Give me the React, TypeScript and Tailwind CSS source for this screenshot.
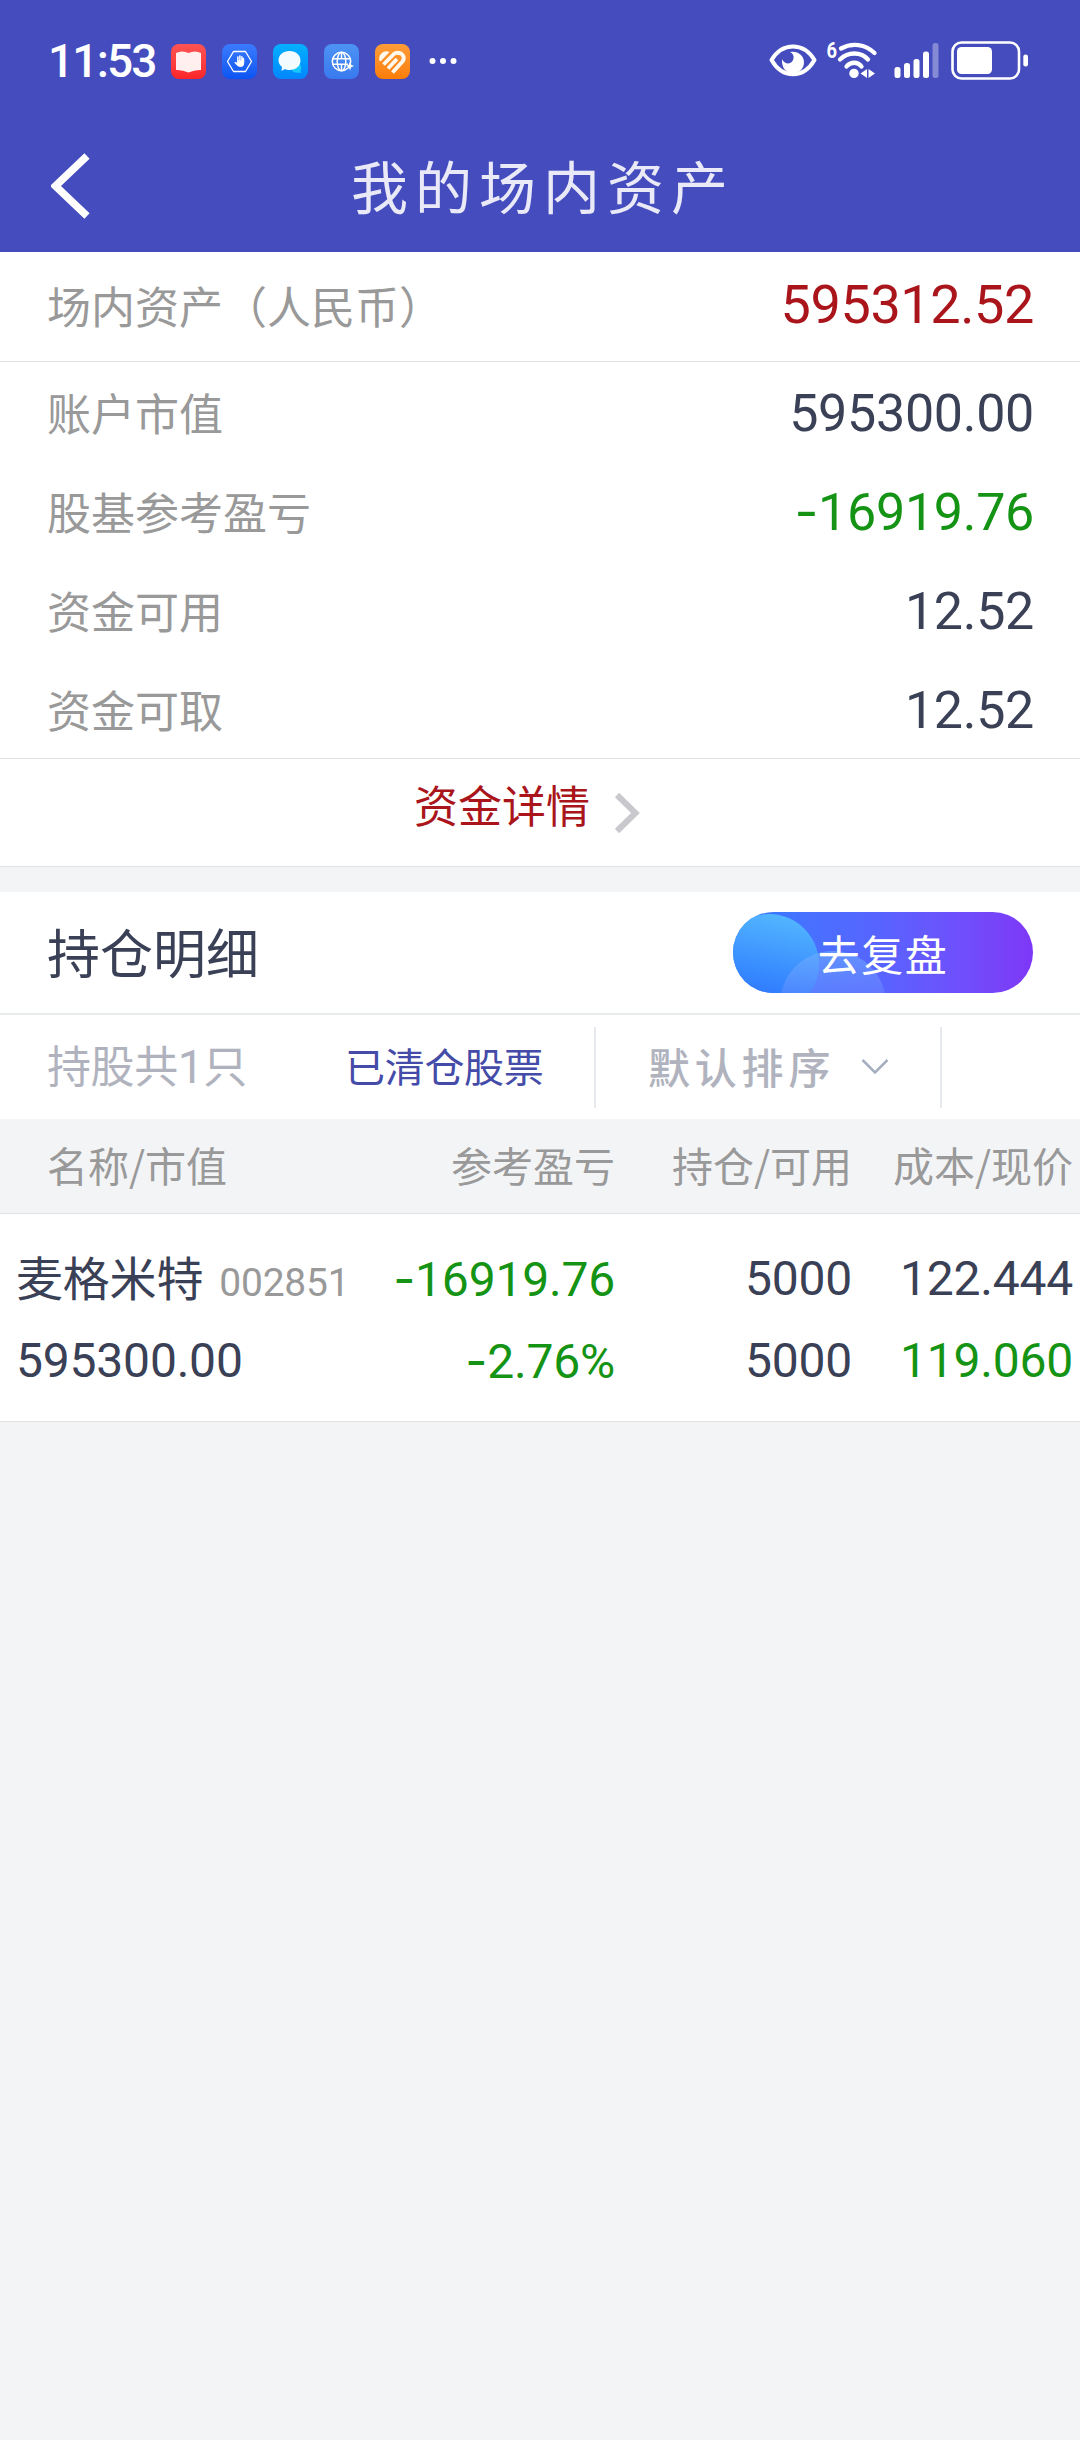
import type { ReactNode } from "react";

const summary = [
  { label: "账户市值", value: "595300.00", color: "text-[#3a4055]" },
  { label: "股基参考盈亏", value: "-16919.76", color: "text-[#149314]" },
  { label: "资金可用", value: "12.52", color: "text-[#3a4055]" },
  { label: "资金可取", value: "12.52", color: "text-[#3a4055]" },
];

const holdings = [
  {
    name: "麦格米特",
    code: "002851",
    marketValue: "595300.00",
    profit: "-16919.76",
    profitRate: "-2.76%",
    position: "5000",
    available: "5000",
    cost: "122.444",
    price: "119.060",
  },
];

function Num({ children, className = "" }: { children: string; className?: string }) {
  const negative = children.startsWith("-");
  return (
    <span className={`font-['Roboto',sans-serif] whitespace-nowrap ${className}`}>
      {negative && <span className="font-['Inter',sans-serif]">-</span>}
      {negative ? children.slice(1) : children}
    </span>
  );
}

function AppIcon({ className, children }: { className: string; children: ReactNode }) {
  return (
    <div className={`w-[35px] h-[35px] rounded-[8px] overflow-hidden ${className}`}>
      <svg viewBox="0 0 35 35" className="block w-full h-full">
        {children}
      </svg>
    </div>
  );
}

function StatusBar() {
  return (
    <div className="h-[122px] flex items-center pl-[48px] pr-[51px] text-white">
      <Num className="w-[123px] text-[46px] leading-none font-medium tracking-[-1.8px]">11:53</Num>
      <div className="flex items-center gap-4">
        <AppIcon className="bg-linear-to-b from-[#ff5353] to-[#fb2328]">
          <path d="M5 9 Q11 6 17.5 9 Q24 6 30 9 V26 Q24 25.5 17.5 28.5 Q11 25.5 5 26 Z" fill="#fff0ef" />
        </AppIcon>
        <AppIcon className="bg-linear-to-b from-[#3b7bff] to-[#0b54f2]">
          <path d="M11.5 7.5 H23.5 L29.5 17.5 L23.5 27.5 H11.5 L5.5 17.5 Z" fill="none" stroke="#fff" strokeWidth="1.3" strokeLinejoin="round" />
          <path d="M15.9 18 V13 M17.9 17 V12 M19.9 17 V12.8 M21.4 18 V14.5" stroke="#fff" strokeWidth="1.5" strokeLinecap="round" />
          <path d="M15.2 16.5 H22.2 V19 Q22 23 18.5 23 Q16 23 14.6 21 L12.2 18.4 Q13 17.2 15.2 18.8 Z" fill="#fff" />
        </AppIcon>
        <AppIcon className="bg-linear-to-b from-[#06b0ff] to-[#0586ff]">
          <path d="M25 19 Q30 22 27.5 26.5 L28.5 29 L25.5 28.4 Q21 29.5 18.5 26 Z" fill="#16c8ff" />
          <path d="M16.5 7 C23 7 27.5 11 27.5 16.5 C27.5 22 23 26 16.5 26 C14.5 26 13 25.8 12 25 L8.5 27 L9 23 C6.8 21.2 5.5 19 5.5 16.5 C5.5 11 10 7 16.5 7 Z" fill="#f2fbff" />
        </AppIcon>
        <AppIcon className="bg-linear-to-b from-[#4d93f5] to-[#3979ee]">
          <g fill="none" stroke="#fff" strokeWidth="1.5">
            <circle cx="17.5" cy="17.5" r="9.2" />
            <ellipse cx="17.5" cy="17.5" rx="4.300" ry="9.2" />
            <path d="M17.5 8.5 V14.5 M17.5 20.5 V26.5 M8.5 14.8 H26.500 M8.5 20.2 H24" />
          </g>
          <path d="M26 17.500 L27.2 20.800 L30 22 L27.2 23.200 L26 26.500 L24.800 23.200 L22 22 L24.800 20.800 Z" fill="#fff" />
        </AppIcon>
        <AppIcon className="bg-linear-to-b from-[#ff9d37] to-[#fb7d03]">
          <path d="M4.5 17 C3 11.5 7 7 12 7.2 L14.5 8 L6 17 Z" fill="#fff8ec" />
          <g fill="none" stroke="#fff8ec" strokeWidth="3.800">
            <path d="M8.500 20.500 L19 10 Q22 7.500 24.500 9.500" />
            <path d="M13 24.500 L22 15" />
            <path d="M17.500 28.500 L27.500 17.500 C31 13 26.500 7.500 22 9.500" />
          </g>
        </AppIcon>
      </div>
      <svg viewBox="0 0 28 8" className="w-[28px] h-[8px] ml-[19px]" fill="#fff">
        <circle cx="3.5" cy="4" r="3" />
        <circle cx="14" cy="4" r="3" />
        <circle cx="24.5" cy="4" r="3" />
      </svg>

      <svg viewBox="769 36 260 50" className="w-[260px] h-[50px] ml-auto">
        {/* eye */}
        <path d="M771.5 60 C777 51 784 46.5 793 46.5 C802 46.5 809 51 814.5 60 C809 69.5 802 74.3 793 74.3 C784 74.3 777 69.5 771.5 60 Z" fill="none" stroke="#fff" strokeWidth="4" strokeLinejoin="round" />
        <path d="M792.5 51.7 C799 51.7 804 56 804 62 C804 69 799 73 793 73 C786 73 781.5 68 782 59 C784 64 790 65 792.5 61 C794.5 58 794 54 790 52 Z" fill="#fff" />
        {/* wifi */}
        <g fill="none" stroke="#fff" strokeWidth="4.3" strokeLinecap="round">
          <path d="M841 48.5 C852 42.5 865 44 874.5 53" />
          <path d="M840 59.5 C848 51.5 861 51.5 868 59.5" />
          <path d="M846.5 66.5 C850.5 61.5 858 61.5 861.5 66.5" />
        </g>
        <circle cx="854" cy="73.4" r="4.7" fill="#fff" />
        <path d="M860.5 73.5 L867 69 V78 Z M868.5 69 L875 73.5 L868.5 78 Z" fill="#fff" />
        <text x="826.5" y="58" fontSize="22" fontWeight="700" fill="#fff" textLength="10.5" lengthAdjust="spacingAndGlyphs" fontFamily="Roboto, sans-serif">6</text>
        {/* signal */}
        <g fill="#fff">
          <rect x="894.5" y="67" width="6" height="11" rx="2.5" />
          <rect x="904" y="63" width="6" height="15" rx="2.5" />
          <rect x="913.5" y="59" width="6" height="19" rx="2.5" />
          <rect x="923" y="51.5" width="6" height="26.5" rx="2.5" />
          <rect x="932.5" y="43" width="6" height="35" rx="2.5" opacity="0.35" />
        </g>
        {/* battery */}
        <rect x="952.5" y="42.5" width="66.5" height="36" rx="9" fill="none" stroke="#fff" strokeWidth="2.6" />
        <rect x="957" y="47" width="35" height="27" rx="4.5" fill="#fff" />
        <rect x="1023.3" y="54.5" width="4.7" height="12" rx="2.2" fill="#fff" />
      </svg>
    </div>
  );
}

function TitleBar() {
  return (
    <div className="h-[130px] pb-[2px] flex items-center pl-[51px]">
      <svg viewBox="0 0 40 66" className="w-[40px] h-[66px]">
        <path d="M36 3 L4.5 33 L36 63" fill="none" stroke="#fff" strokeWidth="7.5" />
      </svg>
      <h1 className="ml-[260px] mb-1 text-[57px] leading-none tracking-[7px] text-[#e9e9f7] whitespace-nowrap">
        我的场内资产
      </h1>
    </div>
  );
}

function Summary() {
  return (
    <section className="bg-white">
      <div className="h-[110px] pb-[3px] flex items-center justify-between pl-[47px] pr-[46px] border-b border-[#e2e3e4]">
        <span className="text-[44px] leading-none text-[#999]">场内资产（人民币）</span>
        <Num className="text-[54px] leading-none tracking-[-0.4px] text-[#a9151b]">595312.52</Num>
      </div>
      <div className="border-b border-[#e2e3e4]">
        {summary.map((row) => (
          <div key={row.label} className="h-[99px] flex items-center justify-between pl-[47px] pr-[46px]">
            <span className="text-[44px] leading-none text-[#999]">{row.label}</span>
            <Num className={`mt-[4px] text-[52px] leading-none tracking-[-0.3px] ${row.color}`}>{row.value}</Num>
          </div>
        ))}
      </div>
      <button className="w-full h-[108px] pb-[18px] pl-[414px] flex items-center border-b border-[#e2e3e4]">
        <span className="text-[44px] leading-none text-[#a9151b]">资金详情</span>
        <svg viewBox="0 0 26 42" className="w-[26px] h-[42px] ml-[24px] mt-[18px]">
          <path d="M3 3 L21.5 21 L3 39" fill="none" stroke="#c8c8cd" strokeWidth="6" />
        </svg>
      </button>
    </section>
  );
}

function ReviewButton() {
  return (
    <button className="w-[300px] h-[81px] rounded-full overflow-hidden relative bg-linear-to-r from-[#2c7dff] via-[#5863ff] to-[#7e37f7]">
      <svg viewBox="0 0 300 81" className="absolute inset-0 w-full h-full">
        <defs>
          <linearGradient id="bubble" x1="0.6" y1="0" x2="0.4" y2="1">
            <stop offset="0" stopColor="#52b6ff" />
            <stop offset="0.8" stopColor="#2f7bff" />
          </linearGradient>
          <linearGradient id="bubbleSmall" x1="0" y1="0" x2="0" y2="1">
            <stop offset="0" stopColor="#6fb0ff" stopOpacity="0.6" />
            <stop offset="0.45" stopColor="#6f8cff" stopOpacity="0.4" />
          </linearGradient>
        </defs>
        <circle cx="36" cy="52" r="50" fill="url(#bubble)" />
        <circle cx="100" cy="92" r="53" fill="url(#bubbleSmall)" />
      </svg>
      <span className="relative block text-[42px] leading-[72px] tracking-[1.5px] text-white">去复盘</span>
    </button>
  );
}

function Holdings() {
  return (
    <section className="mt-[25px] bg-white">
      <div className="h-[123px] flex items-center justify-between pl-[47px] pr-[47px] border-b-2 border-[#e8ebec]">
        <h2 className="mb-[3px] text-[53px] leading-none text-[#3a4055]">持仓明细</h2>
        <ReviewButton />
      </div>

      <div className="h-[104px] flex items-center">
        <span className="w-[300px] pl-[47px] mb-[3px] text-[44px] leading-none tracking-[-0.4px] text-[#b0b3be] whitespace-nowrap">
          持股共<Num className="text-[46px]">1</Num>只
        </span>
        <span className="w-[294px] pl-[45px] mb-[4px] text-[40px] leading-none tracking-[-0.3px] text-[#444ba8] whitespace-nowrap">
          已清仓股票
        </span>
        <div className="w-[348px] h-[81px] pl-[52px] flex items-center border-x-2 border-[#e6eaef] text-[#b0b3be]">
          <span className="mb-[2px] text-[42px] leading-none font-medium tracking-[4.8px] whitespace-nowrap">默认排序</span>
          <svg viewBox="0 0 28 18" className="w-[28px] h-[18px] ml-[26px]">
            <path d="M1.5 2 L14 14.5 L26.5 2" fill="none" stroke="#a5afbf" strokeWidth="2.5" />
          </svg>
        </div>
      </div>

      <div className="h-[95px] pb-[4px] grid grid-cols-[615px_237px_1fr] items-center pr-[7px] bg-[#f3f4f6] border-b border-[#e2e3e4] text-[41px] leading-none text-[#999] whitespace-nowrap">
        <div className="flex justify-between pl-[47px]">
          <span>名称/市值</span>
          <span>参考盈亏</span>
        </div>
        <span className="text-right">持仓/可用</span>
        <span className="text-right">成本/现价</span>
      </div>

      {holdings.map((h) => (
        <div
          key={h.code}
          className="h-[208px] pt-[24px] pr-[7px] grid grid-cols-[615px_237px_1fr] grid-rows-[82px_82px] items-center border-b border-[#e2e3e4] text-[48px] leading-none tracking-[-0.2px] text-[#3a4055]"
        >
          <div className="flex items-center justify-between pl-[16px]">
            <div className="flex items-center">
              <span className="mb-[8px] text-[47px]">{h.name}</span>
              <Num className="ml-[16px] mt-[9px] text-[39px] text-[#999]">{h.code}</Num>
            </div>
            <Num className="text-[#149314]">{h.profit}</Num>
          </div>
          <Num className="text-right">{h.position}</Num>
          <Num className="text-right">{h.cost}</Num>
          <div className="flex items-center justify-between pl-[16px]">
            <Num>{h.marketValue}</Num>
            <Num className="text-[#149314]">{h.profitRate}</Num>
          </div>
          <Num className="text-right">{h.available}</Num>
          <Num className="text-right text-[#149314]">{h.price}</Num>
        </div>
      ))}
    </section>
  );
}

export default function App() {
  return (
    <div className="w-[1080px] h-[2440px] bg-[#f3f4f6] font-['Noto_Sans_CJK_SC',sans-serif]">
      <header className="bg-[#444cbe]">
        <StatusBar />
        <TitleBar />
      </header>
      <Summary />
      <Holdings />
    </div>
  );
}
